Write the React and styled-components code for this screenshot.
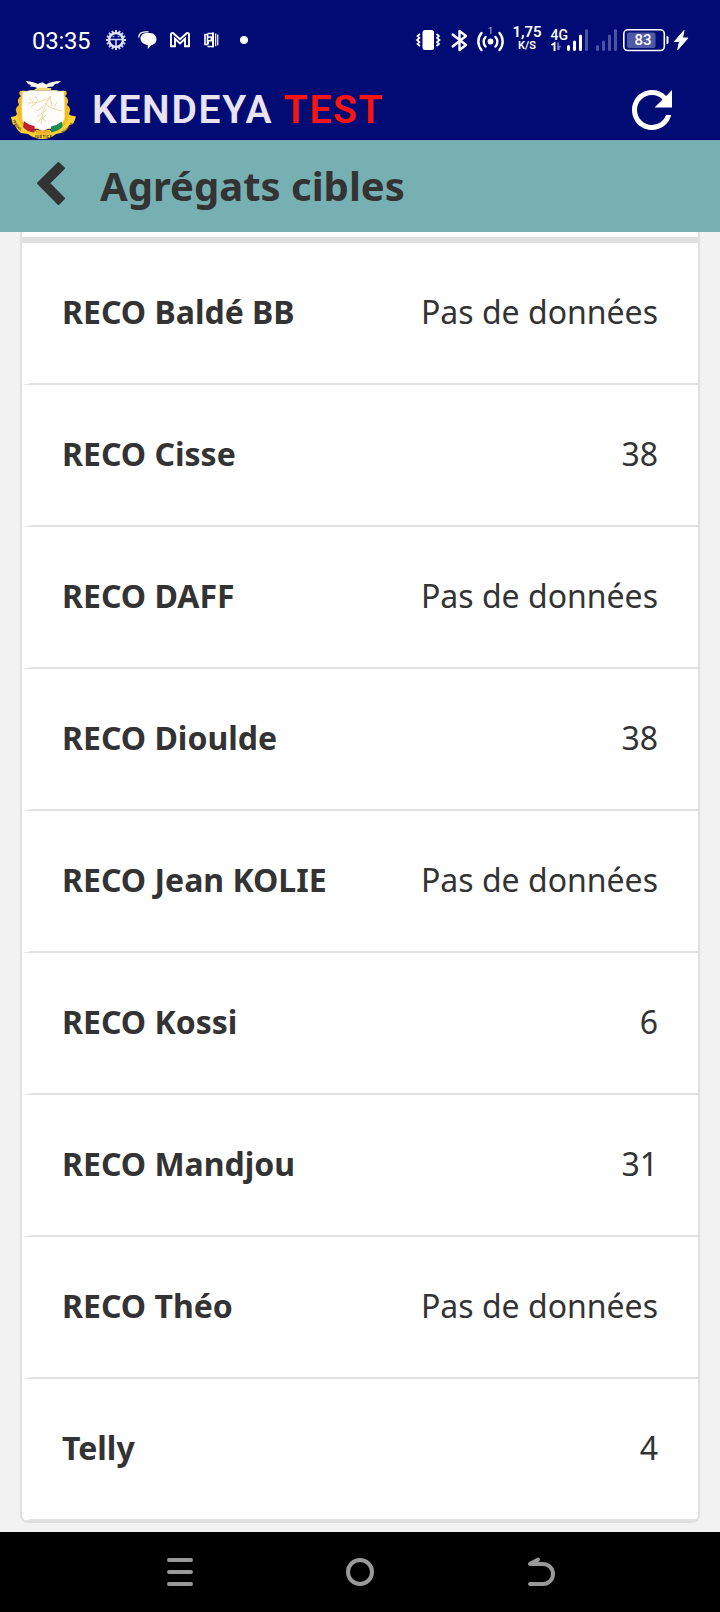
import React from "react";
import styled, { createGlobalStyle } from "styled-components";

const GlobalStyle = createGlobalStyle`
  body { margin: 0; background: #f2f2f2; }
  * { box-sizing: border-box; }
`;

const Screen = styled.div`
  width: 720px;
  height: 1612px;
  display: flex;
  flex-direction: column;
  overflow: hidden;
  background: #f2f2f2;
  color: #333;
  font-family: "Noto Sans", sans-serif;
`;

const StatusBar = styled.div`
  height: 80px;
  flex: none;
  display: flex;
  justify-content: space-between;
  align-items: center;
  padding: 0 31px 0 32px;
  background: #000b73;
  color: #fff;
  font-family: Roboto, sans-serif;
`;

const StatusGroup = styled.div`
  display: flex;
  align-items: center;
`;

const Clock = styled.span`
  width: 74px;
  padding-top: 2px;
  font-size: 24px;
  line-height: 28px;
  letter-spacing: -0.3px;
`;

const Glyph = styled.svg`
  display: block;
  flex: none;
  width: ${(p) => p.$w}px;
  height: 28px;
  margin-left: ${(p) => p.$gap || 0}px;
  overflow: visible;
`;

const NetSpeed = styled.div`
  width: 30px;
  height: 28px;
  margin-left: 7px;
  display: flex;
  flex-direction: column;
  align-items: center;
  font-weight: 600;
`;

const SpeedValue = styled.span`
  font-size: 15px;
  line-height: 15px;
  margin-top: -1px;
`;

const SpeedUnit = styled.span`
  font-size: 11px;
  line-height: 11px;
`;

const AppBar = styled.header`
  height: 61px;
  flex: none;
  display: flex;
  align-items: flex-start;
  background: #000b73;
  padding: 0 38px 0 10px;
  border-bottom: 1px solid #76a5bd;
`;

const Emblem = styled.svg`
  display: block;
  width: 68px;
  height: 60px;
`;

const Brand = styled.h1`
  flex: 1;
  margin: 0;
  padding-left: 14px;
  font: 600 39px/60px Roboto, sans-serif;
  letter-spacing: 1.7px;
  color: #e9e3f1;
  white-space: nowrap;
`;

const Tag = styled.span`
  color: #fb1410;
`;

const RefreshIcon = styled.svg`
  display: block;
  width: 60px;
  height: 60px;
`;

const TitleBar = styled.div`
  height: 91px;
  flex: none;
  display: flex;
  align-items: center;
  padding: 0 0 2px 36px;
  background: #77b0b2;
`;

const BackIcon = styled.svg`
  display: block;
  width: 30px;
  height: 46px;
  margin-bottom: 6px;
`;

const Title = styled.h2`
  margin: 0 0 0 34px;
  font-size: 40px;
  line-height: 56px;
  font-weight: 700;
`;

const Content = styled.main`
  flex: 1;
  padding: 0 20px;
`;

const Card = styled.section`
  height: 1291px;
  padding-top: 5px;
  background: #fff;
  border: 2px solid #e0e0e0;
  border-top: 0;
  border-radius: 0 0 8px 8px;
`;

const Rows = styled.ul`
  margin: 0;
  padding: 0;
  list-style: none;
  border-top: 6px solid #e0e0e0;
`;

const Row = styled.li`
  height: 142px;
  display: flex;
  align-items: center;
  justify-content: space-between;
  padding: 0 40px 2px 30px;
  border-left: 10px solid transparent;
  border-bottom: 2px solid #e0e0e0;
  font-size: 32px;
  line-height: 44px;
`;

const Name = styled.span`
  font-weight: 700;
`;

const Value = styled.span`
  font-weight: 400;
`;

const NavBar = styled.nav`
  height: 80px;
  flex: none;
  display: flex;
  align-items: center;
  padding: 0 90px;
  background: #000;
`;

const NavButton = styled.div`
  flex: 1;
  display: flex;
  justify-content: center;
`;

const NavIcon = styled.svg`
  display: block;
  width: 32px;
  height: 32px;
  fill: none;
  stroke: #999;
  stroke-width: 4;
  stroke-linecap: round;
  stroke-linejoin: round;
`;

const rows = [
  ["RECO Baldé BB", "Pas de données"],
  ["RECO Cisse", "38"],
  ["RECO DAFF", "Pas de données"],
  ["RECO Dioulde", "38"],
  ["RECO Jean KOLIE", "Pas de données"],
  ["RECO Kossi", "6"],
  ["RECO Mandjou", "31"],
  ["RECO Théo", "Pas de données"],
  ["Telly", "4"],
];

const teeth = Array.from({ length: 16 }, (_, i) => i * 22.5);

function StatusIcons() {
  return (
    <StatusBar>
      <StatusGroup>
        <Clock>03:35</Clock>
        <Glyph $w={20} viewBox="0 0 20 28">
          <g fill="#cfd3f5">
            {teeth.map((a) => (
              <rect key={a} x="9" y="4" width="2" height="4" transform={`rotate(${a} 10 14)`} />
            ))}
          </g>
          <circle cx="10" cy="14" r="7" fill="none" stroke="#dfe2fb" strokeWidth="2.4" />
          <path d="M4 13.500h12M10 14v6" stroke="#cfd3f5" strokeWidth="1.600" />
          <path d="M6.500 10.500h2M11.500 10.500h2" stroke="#8f96d6" strokeWidth="1.500" />
        </Glyph>
        <Glyph $w={20} $gap={12} viewBox="0 0 20 28">
          <path d="M8 7h4c4 0 6.500 3 6.500 6.300s-2.500 5.200-5.300 6L9.800 23v-3.800C6 18.500 2.500 16 2.500 12.500 2.500 10 5 7 8 7z" fill="#fff" />
          <path d="M.8 11.500C.8 7.800 3.500 5.800 7.500 5.800h3" fill="none" stroke="#fff" strokeWidth="1.300" />
        </Glyph>
        <Glyph $w={22} $gap={11} viewBox="0 0 22 28">
          <path d="M2 20.300V8.500Q2 6.800 4 7l7 6.300L18 7q2-.2 2 1.500v11.800h-4v-7.500l-5 4.700-5-4.700v7.500z" fill="none" stroke="#fff" strokeWidth="1.900" />
        </Glyph>
        <Glyph $w={16} $gap={13} viewBox="0 0 16 28">
          <path d="M3.500 7.500h5.500v13H3.500M3.500 8.500H1v10h2.500z" fill="none" stroke="#fff" strokeWidth="1.600" />
          <path d="M4 11h3.300v3.800H4.300V18" fill="none" stroke="#fff" strokeWidth="1.600" />
          <path d="M9 6.500v14.800" stroke="#fff" strokeWidth="2" />
          <path d="M11.700 7.500v12.800M13.800 8.500v10.800" stroke="#fff" strokeWidth="1.200" />
        </Glyph>
        <Glyph $w={8} $gap={20} viewBox="0 0 8 28">
          <circle cx="4" cy="14" r="4" fill="#fff" />
        </Glyph>
      </StatusGroup>
      <StatusGroup>
        <Glyph $w={24} viewBox="416 26 24 28">
          <rect x="422.500" y="30" width="11.500" height="20" rx="2.500" fill="#fff" />
          <path d="M420 34l-2.500 2 2 2-2.500 2 2.500 2-2 2 2.500 2M436.500 34l2.500 2-2 2 2.500 2-2.500 2 2 2-2.500 2" fill="none" stroke="#fff" strokeWidth="1.700" />
        </Glyph>
        <Glyph $w={18} $gap={10} viewBox="450 26 18 28">
          <path d="M452 34l14 11-6.500 5V31l6.500 5-14 11" fill="none" stroke="#fff" strokeWidth="2.400" strokeLinejoin="round" />
        </Glyph>
        <Glyph $w={28} $gap={9} viewBox="477 26 28 28">
          <circle cx="490.500" cy="41.500" r="2.900" fill="#fff" />
          <path d="M485.500 37a7 7 0 000 9.500M495.500 37a7 7 0 010 9.500M481.500 33a13 13 0 000 17M499.500 33a13 13 0 010 17" fill="none" stroke="#fff" strokeWidth="2.400" strokeLinecap="round" />
          <text x="488" y="34" fontSize="9" fill="#c9ccf0" fontFamily="Roboto">1</text>
        </Glyph>
        <NetSpeed>
          <SpeedValue>1,75</SpeedValue>
          <SpeedUnit>K/S</SpeedUnit>
        </NetSpeed>
        <Glyph $w={39} $gap={8} viewBox="551 26 39 28">
          <text x="551.500" y="40" fontSize="14" fontWeight="500" fill="#fff" fontFamily="Roboto">4G</text>
          <path d="M552.500 45l3-1.800V51" fill="none" stroke="#fff" strokeWidth="1.900" />
          <path d="M559 42.500V50M559.800 50v-3.500h2" fill="none" stroke="#7b82c6" strokeWidth="1.600" />
          <path d="M569.500 46.500v3M575.500 42v7.500M581.500 36v13.500" stroke="#fff" strokeWidth="3" strokeLinecap="round" />
          <path d="M587.500 30.500v19" stroke="#4b54a0" strokeWidth="3" strokeLinecap="round" />
        </Glyph>
        <Glyph $w={23} $gap={6} viewBox="596 26 23 28">
          <path d="M598.500 46.500v3M604.500 42v7.500M610.500 36v13.500M616.500 30.500v19" stroke="#4b54a0" strokeWidth="3" strokeLinecap="round" />
        </Glyph>
        <Glyph $w={47} $gap={5} viewBox="624 26 47 28">
          <rect x="624.800" y="29.800" width="40.500" height="20.700" rx="4" fill="none" stroke="#fff" strokeWidth="1.600" />
          <rect x="628" y="32.500" width="28.500" height="15.500" rx="2" fill="#5059a6" />
          <path d="M667.500 36q2 0 2 1.500v5q0 1.500-2 1.500z" fill="#fff" />
          <text x="635.500" y="45" fontSize="15" fontWeight="500" fill="#fff" fontFamily="Roboto">83</text>
        </Glyph>
        <Glyph $w={16} $gap={3} viewBox="673 26 16 28">
          <path d="M684 30.500l-9.500 11h5L677.500 50l10.500-12h-5.500z" fill="#fff" stroke="#fff" strokeLinejoin="round" />
        </Glyph>
      </StatusGroup>
    </StatusBar>
  );
}

function Crest() {
  return (
    <Emblem viewBox="10 80 68 60">
      <path d="M20 91q-2 3 1 5-5 3-2 9-5 3-2 9-3 2 1 7l8 8h34l8-8q4-5 1-7 3-6-2-9 3-6-2-9 3-2 1-5z" fill="#f2bd20" />
      <path d="M11 117l7-1.500q1 9 9 12 7 3.500 16 3.500 11 0 18-4 7-4 8-12l7 1.500q-2 7-4 8l-3 .5q-1 6-8 8l-5 1q-6 5-13 5-9 0-15-5l-7-1q-5-4-6-8l-2-.5q-1-3-2-7.500z" fill="#fbd235" />
      <path d="M22 91q5 1 8-.5h26q3 1.500 8 .5-.5 4 .5 9v17q0 7-9 10-8 1-12.500 4-5-3-12-4-9-2-9-10v-17q1-5 0-9z" fill="#fffdfa" stroke="#f7dca0" strokeWidth=".7" />
      <path d="M26 81q8 1 12 3 2-2 5-1.500l3 2q5-3.500 15-3.500l-3 2.500-3 .5-2 2.500-5 .5-3 2.500-6-.5-4-2-5-.5 1-1.500-3-1z" fill="#fbf8e8" />
      <path d="M34 90q3-3 7-2h9q2 0 1 2z" fill="#f3d96d" />
      <g fill="none" stroke="#ecd9a6" strokeWidth="1">
        <path d="M28 103q13 0 23-6M51 96q-8 9-10 28M45 103q6 6 17 8M50 97l2 9M33 102l-4-4M38 101l-3-5M37 102l-6 5M43 107l-6 4M42 113l-5 4M41 118l-3 5M42 119l4-4M43 113l4-4M42 117l4 5M54 107l3-5" />
      </g>
      <path d="M24 121q4 4 10.500 5v6.500Q27 132 23 127z" fill="#bd2031" />
      <path d="M36 129.500q7 2 14 0v4.500q-7 1.500-14 0z" fill="#efb32b" />
      <path d="M51 126.500q6-1 11-5l.5 5.500q-4 4-11.500 5.500z" fill="#168c59" />
      <path id="mottoLeft" d="M12.500 120q3 8 9 11" fill="none" />
      <path id="mottoRight" d="M62 133q9-4 12-13" fill="none" />
      <g fontFamily="Roboto" fontWeight="700" fill="#3d3513">
        <text fontSize="3.400"><textPath href="#mottoLeft">TRAVAIL</textPath></text>
        <text fontSize="4" x="34" y="138" textLength="18">JUSTICE</text>
        <text fontSize="2.600"><textPath href="#mottoRight">SOLIDARITE</textPath></text>
      </g>
    </Emblem>
  );
}

export default function App() {
  return (
    <Screen>
      <GlobalStyle />
      <StatusIcons />
      <AppBar>
        <Crest />
        <Brand>
          KENDEYA <Tag>TEST</Tag>
        </Brand>
        <RefreshIcon viewBox="0 0 24 24" fill="#fff">
          <path d="M17.65 6.35A7.958 7.958 0 0 0 12 4c-4.42 0-7.99 3.58-7.99 8s3.570 8 7.990 8c3.730 0 6.840-2.550 7.730-6h-2.080A5.990 5.990 0 0 1 12 18c-3.310 0-6-2.690-6-6s2.690-6 6-6c1.660 0 3.140.69 4.220 1.780L13 11h7V4l-2.350 2.350z" />
        </RefreshIcon>
      </AppBar>
      <TitleBar>
        <BackIcon viewBox="36 159 30 46">
          <path d="M58.500 162L38 182.200 58.500 203 64 197.500 49 182.200 64 167.200z" fill="#333" stroke="#333" strokeWidth="2" strokeLinejoin="round" />
        </BackIcon>
        <Title>Agrégats cibles</Title>
      </TitleBar>
      <Content>
        <Card>
          <Rows>
            {rows.map(([name, value]) => (
              <Row key={name}>
                <Name>{name}</Name>
                <Value>{value}</Value>
              </Row>
            ))}
          </Rows>
        </Card>
      </Content>
      <NavBar>
        <NavButton>
          <NavIcon viewBox="0 0 32 32">
            <path d="M5 4h22M5 16h22M5 28h22" />
          </NavIcon>
        </NavButton>
        <NavButton>
          <NavIcon viewBox="0 0 32 32">
            <circle cx="16" cy="16" r="12" />
          </NavIcon>
        </NavButton>
        <NavButton>
          <NavIcon viewBox="0 0 32 32">
            <path d="M6 28h13a10 10 0 000-20H6M6 7.700l8-4" />
          </NavIcon>
        </NavButton>
      </NavBar>
    </Screen>
  );
}
